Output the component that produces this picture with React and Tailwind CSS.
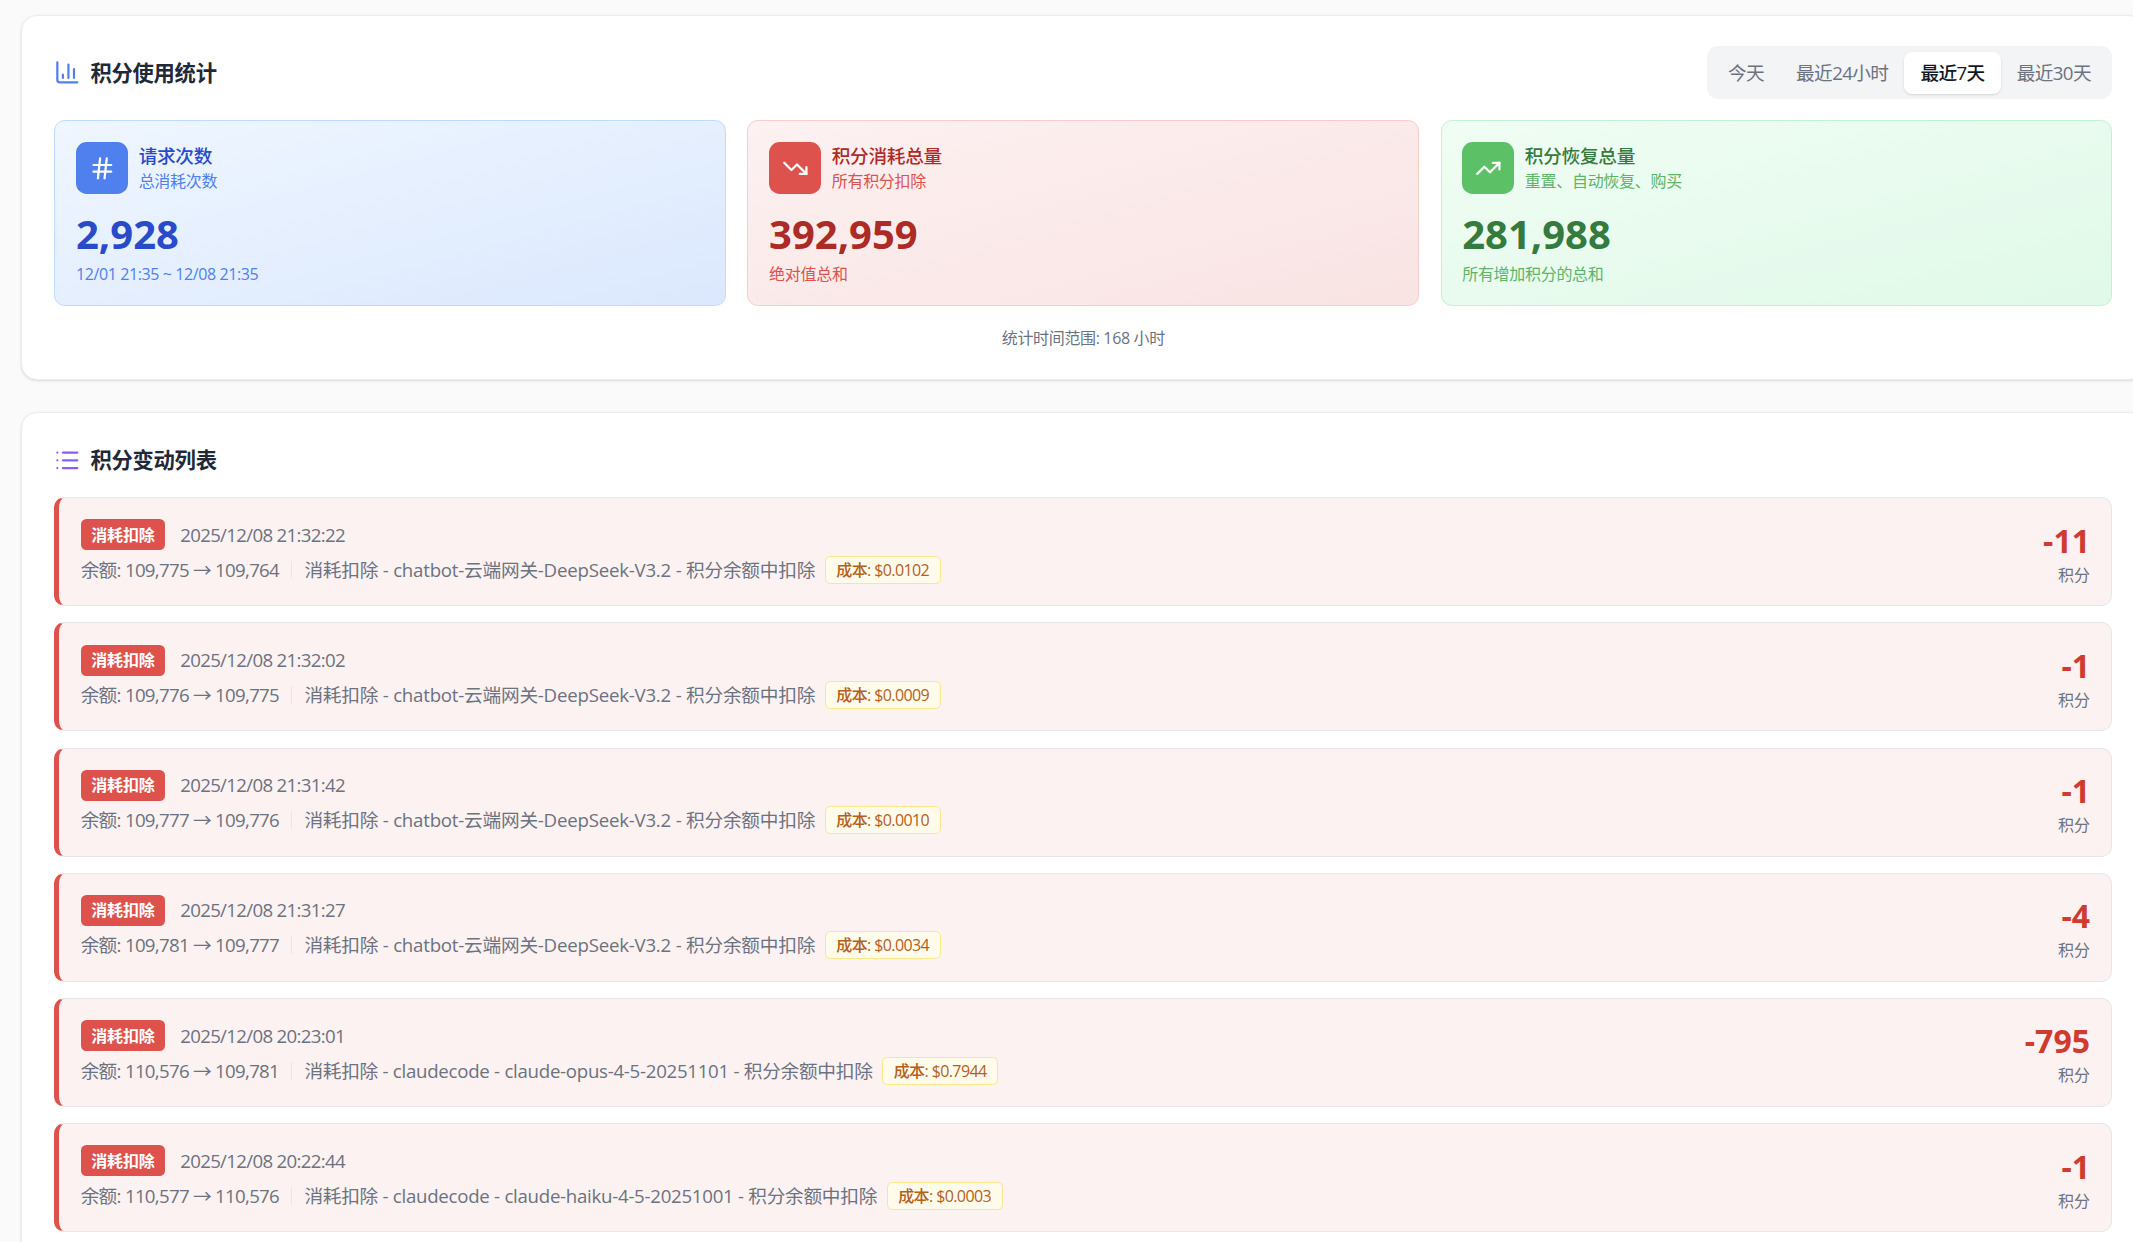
import { ChartColumn, Hash, List, TrendingDown, TrendingUp } from 'lucide-react'

const stats = [
  {
    title: '请求次数',
    sub: '总消耗次数',
    value: '2,928',
    note: '12/01 21:35 ~ 12/08 21:35',
    noteTrack: 'tracking-[-0.4px]',
    Icon: Hash,
    box: 'border-[#bfdbfe] bg-gradient-to-br from-[#eff6ff] to-[#dbe8fd]',
    icon: 'bg-[#4f80ee]',
    head: 'text-[#2a4bc9]',
    soft: 'text-[#4f80ee]',
  },
  {
    title: '积分消耗总量',
    sub: '所有积分扣除',
    value: '392,959',
    note: '绝对值总和',
    noteTrack: 'tracking-[-0.3px]',
    Icon: TrendingDown,
    box: 'border-[#f9cccc] bg-gradient-to-br from-[#fdf1f1] to-[#f9e3e3]',
    icon: 'bg-[#dd524c]',
    head: 'text-[#ad2b26]',
    soft: 'text-[#dd524c]',
  },
  {
    title: '积分恢复总量',
    sub: '重置、自动恢复、购买',
    value: '281,988',
    note: '所有增加积分的总和',
    noteTrack: 'tracking-[-0.3px]',
    Icon: TrendingUp,
    box: 'border-[#c0f3d0] bg-gradient-to-br from-[#f0fdf4] to-[#e0f9e8]',
    icon: 'bg-[#5cc066]',
    head: 'text-[#357a3e]',
    soft: 'text-[#5cb568]',
  },
]

const tabs = ['今天', '最近24小时', '最近7天', '最近30天']

const rows = [
  { time: '2025/12/08 21:32:22', bal: '109,775 → 109,764', desc: 'chatbot-云端网关-DeepSeek-V3.2', cost: '$0.0102', pts: '-11' },
  { time: '2025/12/08 21:32:02', bal: '109,776 → 109,775', desc: 'chatbot-云端网关-DeepSeek-V3.2', cost: '$0.0009', pts: '-1' },
  { time: '2025/12/08 21:31:42', bal: '109,777 → 109,776', desc: 'chatbot-云端网关-DeepSeek-V3.2', cost: '$0.0010', pts: '-1' },
  { time: '2025/12/08 21:31:27', bal: '109,781 → 109,777', desc: 'chatbot-云端网关-DeepSeek-V3.2', cost: '$0.0034', pts: '-4' },
  { time: '2025/12/08 20:23:01', bal: '110,576 → 109,781', desc: 'claudecode - claude-opus-4-5-20251101', cost: '$0.7944', pts: '-795', tight: true },
  { time: '2025/12/08 20:22:44', bal: '110,577 → 110,576', desc: 'claudecode - claude-haiku-4-5-20251001', cost: '$0.0003', pts: '-1', tight: true },
]

function StatCard({ stat }) {
  const { Icon } = stat
  return (
    <div className={`h-[186.5px] rounded-[10.67px] border-[1.33px] px-[20.67px] pt-[21.33px] ${stat.box}`}>
      <div className="flex items-center gap-[10.67px]">
        <div className={`flex h-[52px] w-[52px] items-center justify-center rounded-[10.67px] text-white ${stat.icon}`}>
          <Icon size={26.67} strokeWidth={2} />
        </div>
        <div className="tracking-[-0.3px]">
          <div className={`text-[18.67px] leading-[26px] font-medium ${stat.head}`}>{stat.title}</div>
          <div className={`mt-[1px] text-[16px] leading-[22px] ${stat.soft}`}>{stat.sub}</div>
        </div>
      </div>
      <div className={`mt-[15px] text-[40px] leading-[50px] font-bold ${stat.head}`}>{stat.value}</div>
      <div className={`mt-[3px] text-[16px] leading-[24px] ${stat.noteTrack} ${stat.soft}`}>{stat.note}</div>
    </div>
  )
}

function Row({ row }) {
  return (
    <div className="flex h-[109px] items-center justify-between rounded-[10.67px] border-[1.33px] border-l-[5.33px] border-[#e5e7eb] border-l-[#dd524c] bg-[#fcf2f2] px-[21.33px]">
      <div className="flex flex-col gap-[5.5px]">
        <div className="flex items-center gap-[15px]">
          <span className="flex h-[31px] items-center rounded-[5.33px] bg-[#dd524c] px-[10.67px] text-[16px] font-bold tracking-[-0.2px] text-white">消耗扣除</span>
          <span className="text-[18.67px] tracking-[-0.68px] text-[#6b7280]">{row.time}</span>
        </div>
        <div className="flex h-[28px] items-center text-[18.67px] text-[#6b7280]">
          <span className="tracking-[-0.7px]">余额: {row.bal}</span>
          <span className="mx-[12px] h-[18px] w-[1.33px] bg-[#e5e7eb]" />
          <span className={row.tight ? 'tracking-[-0.27px]' : 'tracking-[-0.22px]'}>消耗扣除 - {row.desc} - 积分余额中扣除</span>
          <span className="ml-[9.5px] flex h-[28px] items-center rounded-[5.33px] border-[1.33px] border-[#fde68a] bg-[#fffbeb] px-[10.67px] text-[16px] font-medium tracking-[-0.6px] text-[#b45f1c]">
            成本: {row.cost}
          </span>
        </div>
      </div>
      <div className="flex flex-col items-end pt-[3px]">
        <div className="text-[32px] leading-[42px] font-bold text-[#d03b30]">{row.pts}</div>
        <div className="mt-[1px] text-[16px] leading-[24px] text-[#6b7280]">积分</div>
      </div>
    </div>
  )
}

export default function App() {
  return (
    <div className="h-screen overflow-hidden bg-[#fafafa] pt-[14.67px] pl-[21.33px] font-['Open_Sans','Noto_Sans_CJK_SC',sans-serif]">
      <section className="h-[365px] w-[2124px] rounded-[16px] border-[1.33px] border-[#ececec] bg-white px-[32px] shadow-sm">
        <div className="flex h-[104px] items-center justify-between pt-[10px]">
          <h2 className="flex items-center gap-[9.5px] text-[21.33px] font-semibold tracking-[-0.3px] text-[#1f2937]">
            <ChartColumn size={26.67} strokeWidth={2} className="text-[#4f80ee]" />
            积分使用统计
          </h2>
          <div className="flex h-[53px] items-center rounded-[10.67px] bg-[#f3f4f6] p-[5.33px]">
            {tabs.map((t) => (
              <span
                key={t}
                className={
                  t === '最近7天'
                    ? 'flex h-[42px] items-center rounded-[8px] bg-white px-[16px] text-[18.67px] font-medium tracking-[-0.6px] text-[#111827] shadow-sm'
                    : 'flex h-[42px] items-center px-[16px] text-[18.67px] tracking-[-0.6px] text-[#6b7280]'
                }
              >
                {t}
              </span>
            ))}
          </div>
        </div>
        <div className="grid grid-cols-3 gap-[21.33px]">
          {stats.map((s) => (
            <StatCard key={s.title} stat={s} />
          ))}
        </div>
        <div className="mt-[19px] text-center text-[16px] leading-[26px] tracking-[-0.35px] text-[#6b7280]">统计时间范围: 168 小时</div>
      </section>

      <section className="mt-[32px] w-[2124px] rounded-[16px] border-[1.33px] border-[#ececec] bg-white px-[32px] pb-[32px] shadow-sm">
        <h2 className="flex h-[84.5px] items-center gap-[9.5px] pt-[11px] text-[21.33px] font-semibold tracking-[-0.3px] text-[#1f2937]">
          <List size={26.67} strokeWidth={2} className="text-[#8b5cf6]" />
          积分变动列表
        </h2>
        <div className="flex flex-col gap-[16.2px]">
          {rows.map((r) => (
            <Row key={r.time} row={r} />
          ))}
        </div>
      </section>
    </div>
  )
}
